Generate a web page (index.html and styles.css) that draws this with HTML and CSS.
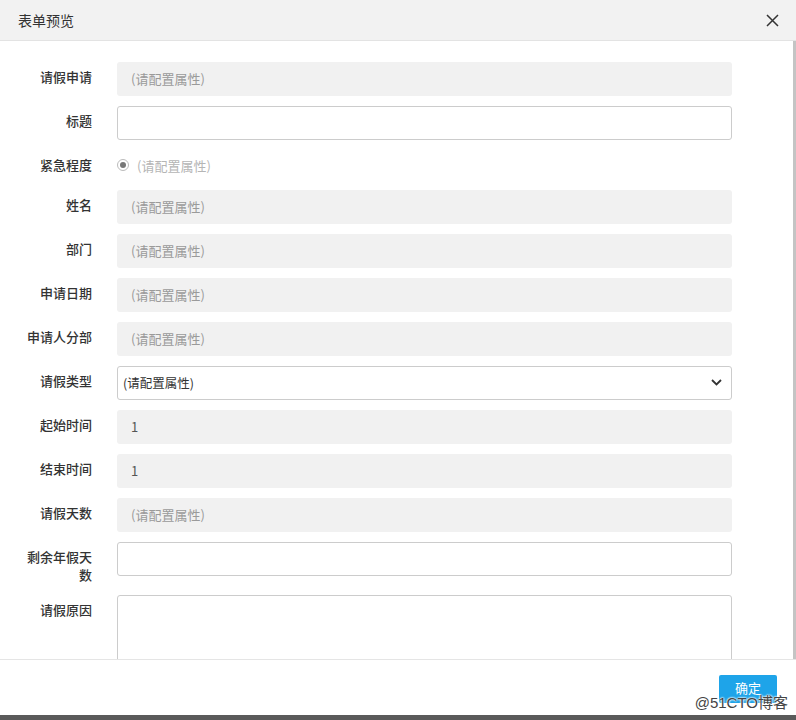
FILE: index.html
```html
<!DOCTYPE html>
<html lang="zh">
<head>
<meta charset="utf-8">
<title>表单预览</title>
<link rel="stylesheet" href="styles.css">
</head>
<body>
<div class="dialog">
  <div class="header">
    <span class="title">表单预览</span>
    <svg class="close" width="13" height="13" viewBox="0 0 13 13"><path d="M1 1 L12 12 M12 1 L1 12" stroke="#333" stroke-width="1.5" fill="none"/></svg>
  </div>
  <div class="body">
    <div class="row"><div class="label">请假申请</div><div class="field disabled placeholder">(请配置属性)</div></div>
    <div class="row"><div class="label">标题</div><div class="field input"></div></div>
    <div class="row radio-row"><div class="label">紧急程度</div><div class="radio-group"><span class="radio"><span class="dot"></span></span><span class="radio-text">(请配置属性)</span></div></div>
    <div class="row"><div class="label">姓名</div><div class="field disabled placeholder">(请配置属性)</div></div>
    <div class="row"><div class="label">部门</div><div class="field disabled placeholder">(请配置属性)</div></div>
    <div class="row"><div class="label">申请日期</div><div class="field disabled placeholder">(请配置属性)</div></div>
    <div class="row"><div class="label">申请人分部</div><div class="field disabled placeholder">(请配置属性)</div></div>
    <div class="row"><div class="label">请假类型</div><div class="field input select"><span>(请配置属性)</span><svg width="11" height="7" viewBox="0 0 11 7"><path d="M1 1 L5.5 5.5 L10 1" stroke="#333" stroke-width="1.8" fill="none"/></svg></div></div>
    <div class="row"><div class="label">起始时间</div><div class="field disabled value">1</div></div>
    <div class="row"><div class="label">结束时间</div><div class="field disabled value">1</div></div>
    <div class="row"><div class="label">请假天数</div><div class="field disabled placeholder">(请配置属性)</div></div>
    <div class="row"><div class="label">剩余年假天数</div><div class="field input"></div></div>
    <div class="row"><div class="label">请假原因</div><div class="field input textarea"></div></div>
  </div>
  <div class="footer">
    <button class="ok">确定</button>
  </div>
</div>
<div class="watermark">@51CTO博客</div>
</body>
</html>
```
FILE: styles.css
```css
html {
  background: #5a5a5a;
}
body {
  margin: 0;
  font-family: "Noto Sans CJK SC", "Liberation Sans", sans-serif;
  font-size: 13px;
  color: #333;
  position: relative;
  height: 720px;
  overflow: hidden;
}
.dialog {
  height: 715px;
  background: #fff;
  display: flex;
  flex-direction: column;
}
.header {
  height: 40px;
  flex: none;
  background: #f2f2f2;
  border-bottom: 1px solid #e3e3e3;
  display: flex;
  align-items: center;
  justify-content: space-between;
  padding: 0 17px 0 18px;
}
.title {
  font-size: 14px;
  color: #333;
  margin-top: -1px;
}
.close {
  display: block;
}
.body {
  flex: 1;
  overflow: hidden;
  padding-top: 21px;
  border-right: 3px solid #c4c4c4;
}
.row {
  display: flex;
  margin-bottom: 10px;
}
.label {
  width: 72px;
  margin-left: 20px;
  text-align: right;
  padding-top: 6px;
  padding-bottom: 1px;
  line-height: 18px;
  font-size: 13px;
  color: #333;
  font-weight: 500;
}
.field {
  margin-left: 25px;
  width: 615px;
  height: 34px;
  box-sizing: border-box;
  display: flex;
  align-items: center;
  border-radius: 3px;
}
.disabled {
  background: #f1f1f1;
  padding-left: 14px;
  padding-bottom: 2px;
}
.placeholder {
  color: #9a9a9a;
}
.value {
  color: #555;
}
.input {
  border: 1px solid #ccc;
  background: #fff;
}
.select {
  padding: 0 9px 1px 5px;
  justify-content: space-between;
  color: #333;
  font-size: 12.5px;
}
.textarea {
  height: 80px;
}
.radio-row {
  height: 30px;
}
.radio-group {
  margin-left: 25px;
  display: flex;
  align-items: center;
  height: 30px;
  box-sizing: border-box;
}
.radio {
  width: 10px;
  height: 10px;
  border: 1px solid #bbb;
  border-radius: 50%;
  display: flex;
  align-items: center;
  justify-content: center;
  background: #fff;
}
.dot {
  width: 6px;
  height: 6px;
  border-radius: 50%;
  background: #777;
}
.radio-text {
  margin-left: 8px;
  color: #b5b5b5;
}
.footer {
  height: 56px;
  flex: none;
  border-top: 1px solid #e5e5e5;
  display: flex;
  justify-content: flex-end;
  align-items: flex-start;
  padding: 15px 19px 0 0;
  box-sizing: border-box;
}
.ok {
  width: 58px;
  height: 28px;
  border: none;
  border-radius: 2px;
  background: #1ea4e9;
  color: #fff;
  font-family: inherit;
  font-size: 13px;
  line-height: 26px;
  padding: 0 0 2px;
}
.watermark {
  position: absolute;
  right: 8px;
  top: 693px;
  font-size: 15px;
  line-height: 20px;
  color: #444;
  font-family: "Liberation Sans", "Noto Sans CJK SC", sans-serif;
  text-shadow: 0 0 2px #fff, 0 0 2px #fff, 0 0 2px #fff;
}
```
